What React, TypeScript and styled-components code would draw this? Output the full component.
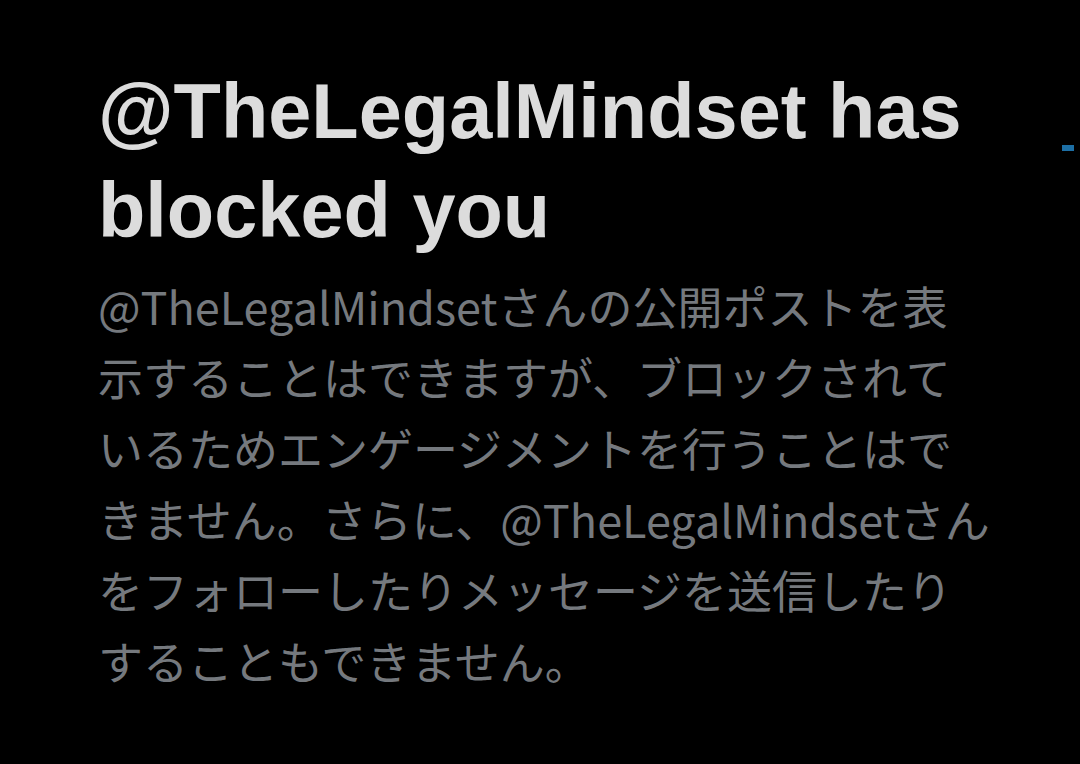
import styled, { createGlobalStyle } from "styled-components";

const GlobalStyle = createGlobalStyle`
	html, body {
		margin: 0;
		padding: 0;
		background: #000;
	}
	body {
		width: 1080px;
		height: 764px;
		overflow: hidden;
	}
`;

const App = () => {
	return (
		<Page>
			<GlobalStyle />
			<Notice>
				<Title>
					@TheLegalMindset has
					<br />
					blocked you
				</Title>
				<Description>
					@TheLegalMindsetさんの公開ポストを表
					<br />
					示することはできますが、ブロックされて
					<br />
					いるためエンゲージメントを行うことはで
					<br />
					きません。さらに、@TheLegalMindsetさん
					<br />
					をフォローしたりメッセージを送信したり
					<br />
					することもできません。
				</Description>
			</Notice>
			<EdgeMark />
		</Page>
	);
};

export default App;

const Page = styled.div`
	position: relative;
	width: 1080px;
	height: 764px;
	background: #000;
	padding: 62px 0 0 98px;
	box-sizing: border-box;
`;

const Notice = styled.div`
	display: flex;
	flex-direction: column;
	gap: 10px;
	width: 900px;
`;

const Title = styled.h1`
	margin: 0;
	font-family: "Liberation Sans", Arial, sans-serif;
	font-weight: 700;
	font-size: 77.5px;
	line-height: 99px;
	color: #dcdcdc;
	white-space: nowrap;
`;

const Description = styled.p`
	margin: 0;
	font-family: "Noto Sans CJK JP", "Noto Sans", sans-serif;
	font-weight: 400;
	font-size: 45px;
	line-height: 71px;
	color: #75797e;
	white-space: nowrap;
`;

const EdgeMark = styled.div`
	position: absolute;
	left: 1062px;
	top: 145px;
	width: 12px;
	height: 6px;
	background: #1d6fa5;
`;
